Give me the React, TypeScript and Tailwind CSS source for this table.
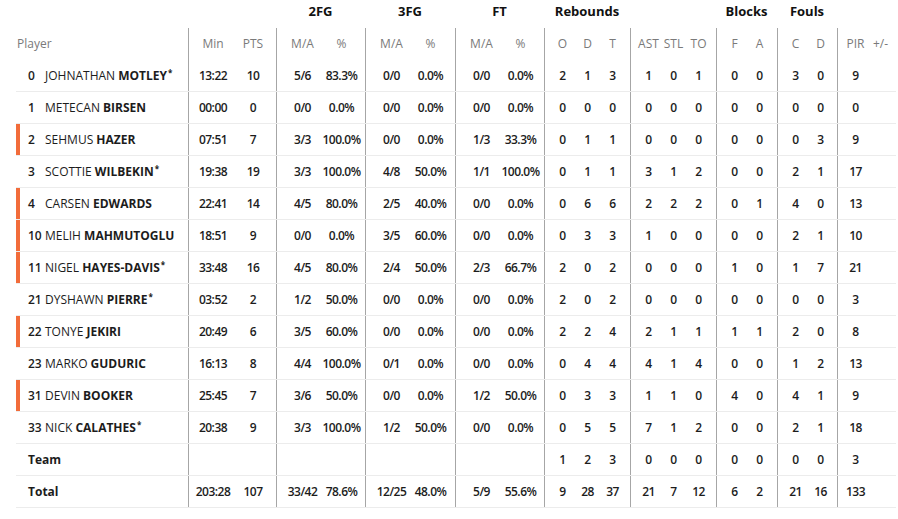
import React from "react"

type Row = {
  num: string
  first: string
  last: string
  star?: boolean
  bar?: boolean
  stats: string[][]
}

// section layout: width + left padding, and cell width
const SECTIONS = [
  { box: "w-[88px] pl-[4px]", cell: "w-[40px]" },
  { box: "w-[89px] pl-[6px]", cell: "w-[39px]" },
  { box: "w-[90px] pl-[6px]", cell: "w-[39px]" },
  { box: "w-[89px] pl-[6px]", cell: "w-[39px]" },
  { box: "w-[86px] pl-[5px]", cell: "w-[25px]" },
  { box: "w-[86px] pl-[5px]", cell: "w-[25px]" },
  { box: "w-[61px] pl-[5px]", cell: "w-[25px]" },
  { box: "w-[60px] pl-[5px]", cell: "w-[25px]" },
  { box: "w-[59px] pl-[5px]", cell: "w-[25px]" },
]

const GROUP_WIDTHS = ["w-[88px]", "w-[89px]", "w-[90px]", "w-[89px]", "w-[86px]", "w-[86px]", "w-[61px]", "w-[60px]", "w-[59px]"]
const GROUPS = ["", "2FG", "3FG", "FT", "Rebounds", "", "Blocks", "Fouls", ""]

const LABELS = [
  ["Min", "PTS"],
  ["M/A", "%"],
  ["M/A", "%"],
  ["M/A", "%"],
  ["O", "D", "T"],
  ["AST", "STL", "TO"],
  ["F", "A"],
  ["C", "D"],
  ["PIR", "+/-"],
]

const ROWS: Row[] = [
  { num: "0", first: "JOHNATHAN", last: "MOTLEY", star: true, stats: [["13:22", "10"], ["5/6", "83.3%"], ["0/0", "0.0%"], ["0/0", "0.0%"], ["2", "1", "3"], ["1", "0", "1"], ["0", "0"], ["3", "0"], ["9", ""]] },
  { num: "1", first: "METECAN", last: "BIRSEN", stats: [["00:00", "0"], ["0/0", "0.0%"], ["0/0", "0.0%"], ["0/0", "0.0%"], ["0", "0", "0"], ["0", "0", "0"], ["0", "0"], ["0", "0"], ["0", ""]] },
  { num: "2", first: "SEHMUS", last: "HAZER", bar: true, stats: [["07:51", "7"], ["3/3", "100.0%"], ["0/0", "0.0%"], ["1/3", "33.3%"], ["0", "1", "1"], ["0", "0", "0"], ["0", "0"], ["0", "3"], ["9", ""]] },
  { num: "3", first: "SCOTTIE", last: "WILBEKIN", star: true, stats: [["19:38", "19"], ["3/3", "100.0%"], ["4/8", "50.0%"], ["1/1", "100.0%"], ["0", "1", "1"], ["3", "1", "2"], ["0", "0"], ["2", "1"], ["17", ""]] },
  { num: "4", first: "CARSEN", last: "EDWARDS", bar: true, stats: [["22:41", "14"], ["4/5", "80.0%"], ["2/5", "40.0%"], ["0/0", "0.0%"], ["0", "6", "6"], ["2", "2", "2"], ["0", "1"], ["4", "0"], ["13", ""]] },
  { num: "10", first: "MELIH", last: "MAHMUTOGLU", bar: true, stats: [["18:51", "9"], ["0/0", "0.0%"], ["3/5", "60.0%"], ["0/0", "0.0%"], ["0", "3", "3"], ["1", "0", "0"], ["0", "0"], ["2", "1"], ["10", ""]] },
  { num: "11", first: "NIGEL", last: "HAYES-DAVIS", star: true, bar: true, stats: [["33:48", "16"], ["4/5", "80.0%"], ["2/4", "50.0%"], ["2/3", "66.7%"], ["2", "0", "2"], ["0", "0", "0"], ["1", "0"], ["1", "7"], ["21", ""]] },
  { num: "21", first: "DYSHAWN", last: "PIERRE", star: true, stats: [["03:52", "2"], ["1/2", "50.0%"], ["0/0", "0.0%"], ["0/0", "0.0%"], ["2", "0", "2"], ["0", "0", "0"], ["0", "0"], ["0", "0"], ["3", ""]] },
  { num: "22", first: "TONYE", last: "JEKIRI", bar: true, stats: [["20:49", "6"], ["3/5", "60.0%"], ["0/0", "0.0%"], ["0/0", "0.0%"], ["2", "2", "4"], ["2", "1", "1"], ["1", "1"], ["2", "0"], ["8", ""]] },
  { num: "23", first: "MARKO", last: "GUDURIC", stats: [["16:13", "8"], ["4/4", "100.0%"], ["0/1", "0.0%"], ["0/0", "0.0%"], ["0", "4", "4"], ["4", "1", "4"], ["0", "0"], ["1", "2"], ["13", ""]] },
  { num: "31", first: "DEVIN", last: "BOOKER", bar: true, stats: [["25:45", "7"], ["3/6", "50.0%"], ["0/0", "0.0%"], ["1/2", "50.0%"], ["0", "3", "3"], ["1", "1", "0"], ["4", "0"], ["4", "1"], ["9", ""]] },
  { num: "33", first: "NICK", last: "CALATHES", star: true, stats: [["20:38", "9"], ["3/3", "100.0%"], ["1/2", "50.0%"], ["0/0", "0.0%"], ["0", "5", "5"], ["7", "1", "2"], ["0", "0"], ["2", "1"], ["18", ""]] },
]

const TEAM = [["", ""], ["", ""], ["", ""], ["", ""], ["1", "2", "3"], ["0", "0", "0"], ["0", "0"], ["0", "0"], ["3", ""]]
const TOTAL = [["203:28", "107"], ["33/42", "78.6%"], ["12/25", "48.0%"], ["5/9", "55.6%"], ["9", "28", "37"], ["21", "7", "12"], ["6", "2"], ["21", "16"], ["133", ""]]

function Cells({ values, header }: { values: string[][]; header?: boolean }) {
  return (
    <>
      {SECTIONS.map((s, i) => (
        <div key={i} className={`${s.box} shrink-0 flex items-center border-l border-[#a6a6a6]`}>
          {values[i].map((v, j) => (
            <div
              key={j}
              className={`${s.cell} shrink-0 flex justify-center whitespace-nowrap ${
                header
                  ? "text-[12px] text-[#7a7a7a]"
                  : "text-[12px] font-semibold tracking-[-0.5px] text-[#1c1c1c]"
              }`}
            >
              {v}
            </div>
          ))}
        </div>
      ))}
    </>
  )
}

export default function App() {
  return (
    <div className="w-[898px] h-[519px] bg-white" style={{ fontFamily: '"Open Sans", "Noto Sans", sans-serif' }}>
      {/* group titles */}
      <div className="flex h-[28px] pl-[16px]">
        <div className="w-[172px] shrink-0" />
        {GROUPS.map((g, i) => (
          <div key={i} className={`${GROUP_WIDTHS[i]} shrink-0 flex justify-center pt-[2px] text-[13px] font-bold text-[#111]`}>
            {g}
          </div>
        ))}
      </div>

      {/* column labels */}
      <div className="flex h-[32px] ml-[16px]">
        <div className="w-[172px] shrink-0 flex items-center pl-[1px] text-[12px] text-[#7a7a7a]">Player</div>
        <Cells values={LABELS} header />
      </div>

      {ROWS.map((r) => (
        <div key={r.num} className="flex h-[32px] ml-[16px] w-[880px] border-b border-[#ececec]">
          <div
            className={`w-[172px] shrink-0 flex items-center text-[12px] text-[#1c1c1c] ${
              r.bar ? "border-l-4 border-[#f26c3a] pl-[8px]" : "pl-[12px]"
            }`}
          >
            <span className="w-[17px] shrink-0 font-semibold">{r.num}</span>
            <span className="whitespace-nowrap">
              {r.first} <span className="font-bold">{r.last}</span>
              {r.star && <span className="relative -top-[4px] text-[8px] font-bold ml-[1px]">*</span>}
            </span>
          </div>
          <Cells values={r.stats} />
        </div>
      ))}

      <div className="flex h-[32px] ml-[16px] w-[880px] border-b border-[#ececec]">
        <div className="w-[172px] shrink-0 flex items-center pl-[12px] text-[12px] font-bold text-[#1c1c1c]">Team</div>
        <Cells values={TEAM} />
      </div>
      <div className="flex h-[32px] ml-[16px] w-[880px] border-b border-[#ececec]">
        <div className="w-[172px] shrink-0 flex items-center pl-[12px] text-[12px] font-bold text-[#1c1c1c]">Total</div>
        <Cells values={TOTAL} />
      </div>
    </div>
  )
}
